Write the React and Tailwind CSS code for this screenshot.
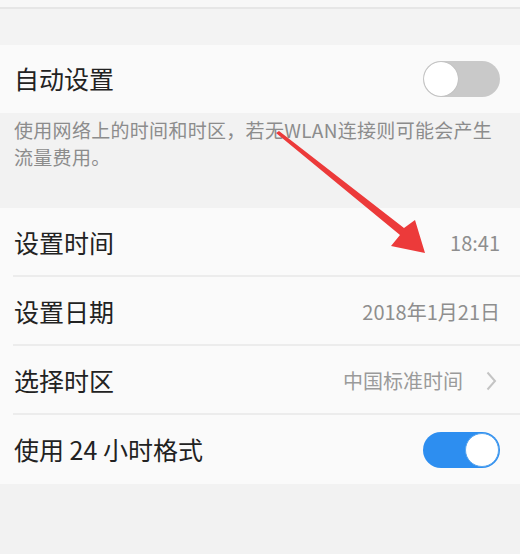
import React from "react";

function Toggle({ on }) {
  return (
    <div
      className={
        "relative w-[77px] h-[36px] rounded-full " +
        (on ? "bg-[#2d8ef0]" : "bg-[#c9c9c9]")
      }
    >
      <div
        className={
          "absolute top-[1px] w-[34px] h-[34px] rounded-full bg-white " +
          (on ? "right-[1px] border border-[#5aa6ee]" : "left-[1px] shadow-[0_0_1px_rgba(0,0,0,0.25)]")
        }
      />
    </div>
  );
}

function Row({ title, right, divider }) {
  return (
    <div className="relative h-[69px] flex items-center justify-between pl-[14px] pr-[20px]">
      <span className="text-[25px] text-[#222]">{title}</span>
      {right}
      {divider && (
        <div className="absolute left-[13px] right-0 bottom-0 h-[2px] bg-[#ececec]" />
      )}
    </div>
  );
}

export default function App() {
  return (
    <div
      className="relative w-[520px] h-[554px] overflow-hidden bg-[#f2f2f2]"
      style={{ fontFamily: '"Noto Sans CJK SC", "Noto Sans", sans-serif' }}
    >
      <div className="h-[9px] bg-[#f7f7f7] border-b-2 border-[#e6e6e6]" />
      <div className="h-[36px] bg-[#f3f3f3]" />
      <div className="h-[68px] bg-[#fafafa] flex items-center justify-between pl-[14px] pr-[20px]">
        <span className="text-[25px] text-[#222]">自动设置</span>
        <Toggle on={false} />
      </div>
      <div className="h-[95px] pl-[14px] pr-[20px] pt-[3px] text-[19px] tracking-[0.3px] leading-[27px] text-[#8c8c8c]">
        使用网络上的时间和时区，若无WLAN连接则可能会产生流量费用。
      </div>
      <div className="bg-[#fafafa]">
        <Row
          title="设置时间"
          divider
          right={<span className="text-[20px] text-[#8e8e8e]">18:41</span>}
        />
        <Row
          title="设置日期"
          divider
          right={<span className="text-[20px] text-[#8e8e8e]">2018年1月21日</span>}
        />
        <Row
          title="选择时区"
          divider
          right={
            <div className="flex items-center gap-[23px]">
              <span className="text-[20px] text-[#9a9a9a]">中国标准时间</span>
              <svg width="11" height="20" viewBox="0 0 11 20" className="mr-[3px]">
                <path d="M1.5 1.5 L9 10 L1.5 18.5" fill="none" stroke="#c4c4c4" strokeWidth="2" />
              </svg>
            </div>
          }
        />
        <Row title="使用 24 小时格式" right={<Toggle on={true} />} />
      </div>
      <svg
        className="absolute left-0 top-0 pointer-events-none"
        width="520"
        height="554"
        viewBox="0 0 520 554"
      >
        <polygon
          points="276,133 279,131 404,228 415,220 425,253 391,246 400,235"
          fill="#ec3a3a"
        />
      </svg>
    </div>
  );
}
